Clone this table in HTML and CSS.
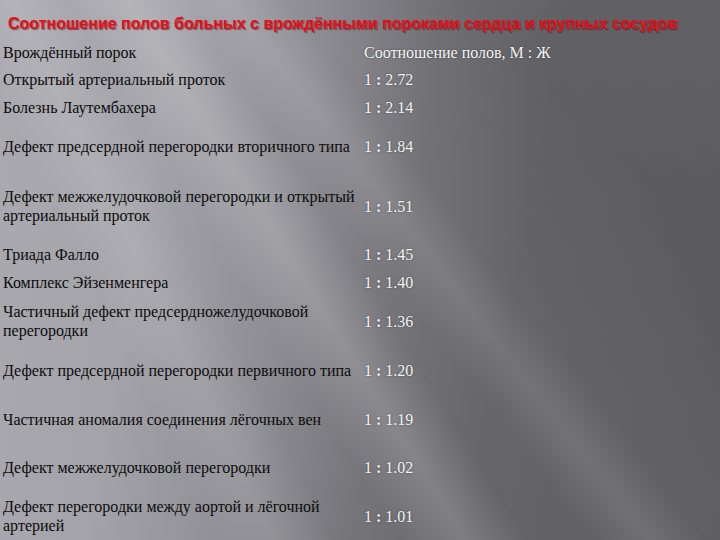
FILE: index.html
```html
<!DOCTYPE html>
<html lang="ru">
<head>
<meta charset="utf-8">
<title>Соотношение полов</title>
<link rel="stylesheet" href="styles.css">
</head>
<body>
<div class="slide">
  <div class="streaks"></div>
  <h1 class="title">Соотношение полов больных с врождёнными пороками сердца и крупных сосудов</h1>
  <div class="table">
    <div class="cell name">Врождённый порок</div>
    <div class="cell ratio head">Соотношение полов, М : Ж</div>

    <div class="cell name">Открытый артериальный проток</div>
    <div class="cell ratio">1 <b>:</b> 2.72</div>

    <div class="cell name">Болезнь Лаутембахера</div>
    <div class="cell ratio">1 <b>:</b> 2.14</div>

    <div class="cell name">Дефект предсердной перегородки вторичного типа</div>
    <div class="cell ratio">1 <b>:</b> 1.84</div>

    <div class="cell name">Дефект межжелудочковой перегородки и открытый артериальный проток</div>
    <div class="cell ratio">1 <b>:</b> 1.51</div>

    <div class="cell name">Триада Фалло</div>
    <div class="cell ratio">1 <b>:</b> 1.45</div>

    <div class="cell name">Комплекс Эйзенменгера</div>
    <div class="cell ratio">1 <b>:</b> 1.40</div>

    <div class="cell name">Частичный дефект предсердножелудочковой перегородки</div>
    <div class="cell ratio">1 <b>:</b> 1.36</div>

    <div class="cell name">Дефект предсердной перегородки первичного типа</div>
    <div class="cell ratio">1 <b>:</b> 1.20</div>

    <div class="cell name">Частичная аномалия соединения лёгочных вен</div>
    <div class="cell ratio">1 <b>:</b> 1.19</div>

    <div class="cell name">Дефект межжелудочковой перегородки</div>
    <div class="cell ratio">1 <b>:</b> 1.02</div>

    <div class="cell name">Дефект перегородки между аортой и лёгочной артерией</div>
    <div class="cell ratio">1 <b>:</b> 1.01</div>
  </div>
</div>
</body>
</html>
```
FILE: styles.css
```css
html, body {
  margin: 0;
  padding: 0;
}
body {
  width: 720px;
  height: 540px;
  overflow: hidden;
  background: #6a6a70;
}
.slide {
  position: relative;
  width: 720px;
  height: 540px;
  overflow: hidden;
  background:
    linear-gradient(100deg, #aaaab0 0%, #a3a3a9 22%, #8e8e94 40%, #747479 55%, #656569 70%, #5e5e63 100%);
}
.streaks {
  position: absolute;
  inset: 0;
  pointer-events: none;
  background:
    linear-gradient(58deg, rgba(255,255,255,0) 38%, rgba(255,255,255,0.16) 44%, rgba(255,255,255,0) 50%),
    linear-gradient(52deg, rgba(255,255,255,0) 52%, rgba(255,255,255,0.10) 57%, rgba(255,255,255,0) 62%),
    linear-gradient(64deg, rgba(255,255,255,0) 22%, rgba(255,255,255,0.10) 28%, rgba(255,255,255,0) 34%),
    linear-gradient(45deg, rgba(0,0,0,0) 60%, rgba(0,0,0,0.06) 80%, rgba(0,0,0,0) 100%);
}
.title {
  position: relative;
  margin: 0;
  padding: 15px 0 0 8px;
  height: 24px;
  font-family: "Liberation Sans", Arial, sans-serif;
  font-weight: bold;
  font-size: 16px;
  line-height: 18px;
  color: #ec0c18;
  white-space: nowrap;
  text-shadow: 1px 1px 1px rgba(40, 20, 30, 0.55);
}
.table {
  position: relative;
  display: grid;
  grid-template-columns: 361px 1fr;
  grid-template-rows: 26px 28px 28px 50px 70px 26px 30px 48px 50px 48px 48px 50px;
  font-family: "Liberation Serif", "Times New Roman", serif;
  font-size: 16px;
  line-height: 19px;
}
.cell {
  align-self: center;
}
.name {
  padding-left: 3px;
  color: #0c0c0c;
}
.ratio {
  padding-left: 3px;
  color: #f4f4f4;
  text-shadow: 0 0 2px rgba(30, 30, 35, 0.55);
}
.ratio b {
  font-weight: bold;
}
```
